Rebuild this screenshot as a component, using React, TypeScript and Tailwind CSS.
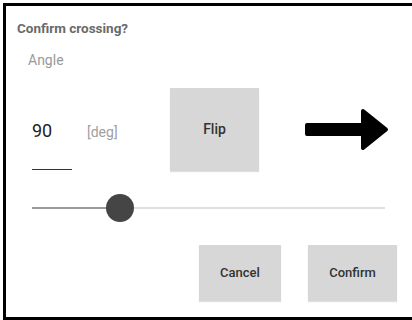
import React from 'react';

function ArrowRight() {
  return (
    <svg width="84" height="42" viewBox="0 0 84 42" className="ml-[46px] shrink-0">
      <polygon
        points="2,16 58,16 58,2 81,20.5 58,39 58,25 2,25"
        fill="#000"
        stroke="#000"
        strokeWidth="4"
        strokeLinejoin="round"
      />
    </svg>
  );
}

function Slider({ value }: { value: number }) {
  const width = 353;
  const pos = (value / 360) * width;
  return (
    <div className="relative ml-[26px] mt-[23px] h-[28px] w-[353px]">
      <div className="absolute left-0 right-0 top-[13px] h-[2px] bg-[#e0e0e0]" />
      <div className="absolute left-0 top-[13px] h-[2px] bg-[#9a9a9a]" style={{ width: pos }} />
      <div
        className="absolute top-0 h-[28px] w-[28px] rounded-full bg-[#454545]"
        style={{ left: pos - 14 }}
      />
    </div>
  );
}

export default function App() {
  const angle = 90;

  return (
    <div className="h-[320px] w-full bg-white pl-[3px] pt-[3px] font-['Roboto',sans-serif]">
      <div className="h-[317px] border-b-[3px] border-l-[3px] border-t-[3px] border-black">
        <div className="pl-[11px] pt-[14px] text-[13.5px] font-bold leading-[16px] text-[#6a6a6a]">
          Confirm crossing?
        </div>
        <div className="mt-[16px] pl-[22px] text-[14px] leading-[16px] text-[#9a9a9a]">Angle</div>

        <div className="mt-[20px] flex h-[83px] items-center">
          <div className="h-full w-[164px] shrink-0 pl-[26px] pt-[33px]">
            <div className="flex items-baseline">
              <span className="w-[55px] text-[18px] leading-[20px] text-[#222]">{angle}</span>
              <span className="text-[14px] leading-[20px] text-[#a0a0a0]">[deg]</span>
            </div>
            <div className="mt-[27px] h-px w-[40px] bg-[#333]" />
          </div>
          <button className="h-[83px] w-[89px] shrink-0 bg-[#d6d7d6] text-[14px] font-medium text-[#333] shadow-[0_1px_1px_rgba(0,0,0,0.12)]">
            Flip
          </button>
          <ArrowRight />
        </div>

        <Slider value={angle} />

        <div className="mt-[23px] flex gap-[27px] pl-[193px]">
          <button className="h-[56px] w-[82px] bg-[#d6d7d6] text-[13px] font-medium text-[#333] shadow-[0_1px_1px_rgba(0,0,0,0.12)]">
            Cancel
          </button>
          <button className="h-[56px] w-[89px] bg-[#d6d7d6] text-[13px] font-medium text-[#333] shadow-[0_1px_1px_rgba(0,0,0,0.12)]">
            Confirm
          </button>
        </div>
      </div>
    </div>
  );
}
